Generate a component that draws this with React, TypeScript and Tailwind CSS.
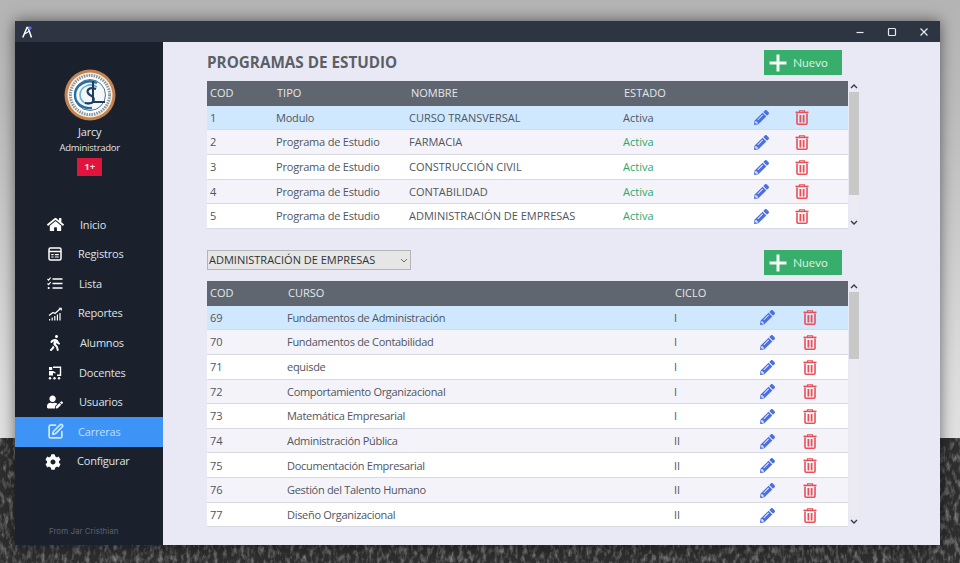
import React from "react";
import { FaHome, FaPencilAlt, FaWalking, FaUserEdit, FaCog } from "react-icons/fa";
import { SquarePen } from "lucide-react";

const ui = "font-['Open_Sans',sans-serif]";

function Logo() {
  return (
    <svg width="52" height="52" viewBox="0 0 52 52" className="block">
      <circle cx="26" cy="26" r="25.5" fill="#c4834e" />
      <circle cx="26" cy="26" r="22.5" fill="#f6ecdc" />
      <circle cx="26" cy="26" r="19.5" fill="#ffffff" stroke="#8496a6" strokeWidth="3" strokeDasharray="1.5 1" />
      <circle cx="26" cy="26" r="15.5" fill="#f3f7fa" stroke="#24506f" strokeWidth="0.8" />
      <path d="M33 14 C23 9 11 16 11 26 C11 35 19 40 28 39" fill="none" stroke="#2b6e99" strokeWidth="2.4" />
      <path d="M33 18 C26 13 16 18 16 26 C16 31 20 35 25 35" fill="none" stroke="#6fb0d6" strokeWidth="1.6" />
      <path d="M32 20 C24 17 21 23 26 26 C32 29 31 36 21 34" fill="none" stroke="#1d3f5c" strokeWidth="2.2" />
      <path d="M29 12 L29 33 L41 33" fill="none" stroke="#1d3f5c" strokeWidth="2" />
    </svg>
  );
}

function RegistrosIcon() {
  return (
    <svg width="14" height="14" viewBox="0 0 14 14">
      <rect x="1" y="1" width="12" height="12" rx="1.5" fill="none" stroke="#fff" strokeWidth="1.5" />
      <path d="M1 4.5H13" stroke="#fff" strokeWidth="1.5" />
      <path d="M3.2 7H5.6V8.2H3.2ZM3.2 9.4H5.6V10.6H3.2ZM6.8 7H10.8V8.2H6.8ZM6.8 9.4H10.8V10.6H6.8Z" fill="#fff" />
    </svg>
  );
}
function ListaIcon() {
  return (
    <svg width="16" height="13" viewBox="0 0 16 13">
      <path d="M5.5 2H15.5M5.5 6.5H15.5M5.5 11H15.5" stroke="#fff" strokeWidth="1.5" />
      <path d="M.5 2L1.6 3.1L3.6 .6M.5 6.5L1.6 7.6L3.6 5.1" stroke="#fff" strokeWidth="1.1" fill="none" />
      <circle cx="1.7" cy="11" r="1.1" fill="#fff" />
    </svg>
  );
}
function ReportesIcon() {
  return (
    <svg width="15" height="14" viewBox="0 0 15 14">
      <path d="M1 13.5V12H2.2V13.5ZM3.6 13.5V10.5H4.8V13.5ZM6.2 13.5V9H7.4V13.5ZM8.8 13.5V7.5H10V13.5ZM11.4 13.5V6H12.6V13.5Z" fill="#fff" />
      <path d="M1 8.5L5 5.5L7 6.5L12.5 1.5" stroke="#fff" strokeWidth="1.2" fill="none" />
      <path d="M10.5 .8H13.8V4Z" fill="#fff" />
    </svg>
  );
}
function DocentesIcon() {
  return (
    <svg width="14" height="14" viewBox="0 0 14 14">
      <path d="M5 1.2H12.5V9.3H9" fill="none" stroke="#fff" strokeWidth="1.4" />
      <rect x="1" y="1" width="3.2" height="3" fill="#fff" />
      <path d="M1 5H5L7.5 6.2V7.4L5 6.8V9.6H1Z" fill="#fff" />
      <circle cx="2" cy="12.3" r="1.2" fill="#fff" />
      <circle cx="6.5" cy="12.3" r="1.2" fill="#fff" />
      <circle cx="11" cy="12.3" r="1.2" fill="#fff" />
    </svg>
  );
}
function TrashIcon() {
  return (
    <svg width="14" height="15" viewBox="0 0 14 15" fill="none">
      <path d="M.5 2.4H13.5" stroke="currentColor" strokeWidth="1.6" />
      <path d="M4.5 2V.8H9.5V2" stroke="currentColor" strokeWidth="1.1" />
      <path d="M2 3.4V13.2Q2 14.2 3 14.2H11Q12 14.2 12 13.2V3.4" stroke="currentColor" strokeWidth="1.6" />
      <path d="M5.4 5V12.4M8.6 5V12.4" stroke="currentColor" strokeWidth="1.8" />
    </svg>
  );
}
function PlusIcon() {
  return (
    <svg width="18" height="18" viewBox="0 0 18 18">
      <path d="M9 .5V17.5M.5 9H17.5" stroke="#f4fbf7" strokeWidth="3" />
    </svg>
  );
}
function Chevron({ down }: { down?: boolean }) {
  return (
    <svg width="8" height="5" viewBox="0 0 8 5" fill="none">
      <path d={down ? "M1 1L4 4L7 1" : "M1 4L4 1L7 4"} stroke="#333b47" strokeWidth="1.4" />
    </svg>
  );
}

const nav = [
  { label: "Inicio", icon: <FaHome size={17} />, text: "pl-[16px]", iconBox: "ml-[31px]" },
  { label: "Registros", icon: <RegistrosIcon />, text: "pl-[14px]", iconBox: "ml-[31px]" },
  { label: "Lista", icon: <ListaIcon />, text: "pl-[15px]", iconBox: "ml-[31px]" },
  { label: "Reportes", icon: <ReportesIcon />, text: "pl-[14px]", iconBox: "ml-[31px]" },
  { label: "Alumnos", icon: <FaWalking size={16} />, text: "pl-[16px]", iconBox: "ml-[31px]" },
  { label: "Docentes", icon: <DocentesIcon />, text: "pl-[15px]", iconBox: "ml-[31px]" },
  { label: "Usuarios", icon: <FaUserEdit size={16} />, text: "pl-[15px]", iconBox: "ml-[31px]" },
  { label: "Carreras", icon: <SquarePen size={17} strokeWidth={2.4} />, text: "pl-[14px]", iconBox: "ml-[31px]", active: true },
  { label: "Configurar", icon: <FaCog size={16} />, text: "pl-[15px]", iconBox: "ml-[29px]" },
];

function Nuevo() {
  return (
    <button className="mr-[18px] flex h-[25px] w-[78px] items-center bg-[#37ae6b] pl-[5px] font-['Lato',sans-serif] text-[12px] text-[#d2eedd]">
      <PlusIcon />
      <span className="pl-[6px] pt-[1px]">Nuevo</span>
    </button>
  );
}

function Scrollbar({ thumb }: { thumb: string }) {
  return (
    <div className="ml-[1px] flex w-[10px] flex-col items-center">
      <div className="flex h-[11px] items-center justify-center"><Chevron /></div>
      <div className="w-full flex-1 bg-[#ecebf4]"><div className={`w-full bg-[#c8c8c8] ${thumb}`} /></div>
      <div className="flex h-[11px] items-center justify-center"><Chevron down /></div>
    </div>
  );
}

function Actions() {
  return (
    <>
      <div className="flex justify-center text-[#4c70e4]"><FaPencilAlt size={15} /></div>
      <div className="flex justify-center text-[#e84f58]"><TrashIcon /></div>
    </>
  );
}

function rowBg(i: number) {
  if (i === 0) return "bg-[#cfe8fd]";
  return i % 2 === 1 ? "bg-[#f4f3fa]" : "bg-white";
}

const programas = [
  ["1", "Modulo", "CURSO TRANSVERSAL", "Activa"],
  ["2", "Programa de Estudio", "FARMACIA", "Activa"],
  ["3", "Programa de Estudio", "CONSTRUCCIÓN CIVIL", "Activa"],
  ["4", "Programa de Estudio", "CONTABILIDAD", "Activa"],
  ["5", "Programa de Estudio", "ADMINISTRACIÓN DE EMPRESAS", "Activa"],
];
const cursos = [
  ["69", "Fundamentos de Administración", "I"],
  ["70", "Fundamentos de Contabilidad", "I"],
  ["71", "equisde", "I"],
  ["72", "Comportamiento Organizacional", "I"],
  ["73", "Matemática Empresarial", "I"],
  ["74", "Administración Pública", "II"],
  ["75", "Documentación Empresarial", "II"],
  ["76", "Gestión del Talento Humano", "II"],
  ["77", "Diseño Organizacional", "II"],
];

const rowBase = "items-center h-[24.65px] pt-[1px] border-b border-[#d9d9e2] text-[#4f5660]";
const headBase = "items-center h-[24.6px] bg-[#5f6670] text-[#e4e6ea]";

export default function App() {
  return (
    <div className={`relative h-[563px] w-[960px] overflow-hidden bg-[linear-gradient(180deg,#b4b4b4_0%,#bdbdbd_20%,#dcdcdc_65%,#e2e2e2_78%)] pl-[15px] pt-[21px] ${ui}`}>
      <svg className="absolute left-0 top-[438px]" width="960" height="125">
        <filter id="grass">
          <feTurbulence type="fractalNoise" baseFrequency="0.22 0.12" numOctaves="3" seed="4" />
          <feColorMatrix values="0 0 0 0 0.38  0 0 0 0 0.38  0 0 0 0 0.38  1.6 0 0 0 -0.7" />
        </filter>
        <rect width="960" height="125" fill="#2e2e2e" />
        <rect width="960" height="125" filter="url(#grass)" />
      </svg>

      <div className="relative flex h-[524px] w-[925px] flex-col shadow-[0_0_14px_rgba(0,0,0,0.55)]">
        <div className="flex h-[21px] items-center justify-between bg-[#2d3542]">
          <svg width="11" height="12" viewBox="0 0 11 12" className="ml-[7px]">
            <path d="M.8 11.5L5 1.5L6 1.5L9.5 11.5" fill="none" stroke="#fff" strokeWidth="1.5" />
            <path d="M2.5 8L7.5 5" stroke="#fff" strokeWidth="1.1" />
            <circle cx="8" cy="2" r="1.8" fill="#5266e8" />
          </svg>
          <div className="flex items-center text-[#e8eaee]">
            <svg width="10" height="10" viewBox="0 0 10 10"><path d="M1.5 5.5H8.5" stroke="currentColor" strokeWidth="1.2" /></svg>
            <svg width="10" height="10" viewBox="0 0 10 10" className="ml-[22px]"><rect x="1.5" y="1.5" width="7" height="7" rx="1" fill="none" stroke="currentColor" strokeWidth="1.2" /></svg>
            <svg width="10" height="10" viewBox="0 0 10 10" className="ml-[22px] mr-[11px]"><path d="M1.5 1.5L8.5 8.5M8.5 1.5L1.5 8.5" stroke="currentColor" strokeWidth="1.2" /></svg>
          </div>
        </div>

        <div className="flex min-h-0 flex-1">
          <aside className="flex w-[147.5px] shrink-0 flex-col bg-[#1a212d]">
            <div className="flex flex-col items-center pl-[2px] pt-[27px]">
              <Logo />
              <div className="mt-[3px] text-[11px] leading-[16px] tracking-[-0.2px] text-[#e2e4e8]">Jarcy</div>
              <div className="mt-[1px] text-[9.5px] leading-[14px] tracking-[-0.25px] text-[#e2e4e8]">Administrador</div>
              <div className="mt-[3px] flex h-[18px] w-[25px] items-center justify-center bg-[#e0143c] text-[9.5px] font-bold text-[#f7dfe3]">1+</div>
            </div>
            <nav className="mt-[34px] flex flex-col">
              {nav.map((n) => (
                <div key={n.label} className={`flex h-[29.6px] items-center text-[11px] tracking-[-0.2px] ${n.active ? "bg-[#3d94f6] text-[#bfe0ff]" : "text-[#dfe2e7]"}`}>
                  <div className={`flex w-[18px] justify-center ${n.iconBox} ${n.active ? "text-[#cfe8ff]" : "text-white"}`}>{n.icon}</div>
                  <span className={n.text}>{n.label}</span>
                </div>
              ))}
            </nav>
            <div className="mb-[8px] mt-auto pl-[34px] font-['Inter',sans-serif] text-[8px] leading-[12px] text-[#5a606b]">From Jar Cristhian</div>
          </aside>

          <main className="min-w-0 flex-1 bg-[#e9e9f5] pl-[44.5px] pt-[8px]">
            <div className="w-[653px]">
              <div className="mb-[6px] flex h-[25px] items-center justify-between">
                <h1 className="text-[15.25px] font-bold text-[#5b5f66]">PROGRAMAS DE ESTUDIO</h1>
                <Nuevo />
              </div>
              <div className="flex h-[147px]">
                <div className="w-[641px] text-[11px]">
                  <div className={`grid grid-cols-[69px_133px_214px_122px_32px_50px_21px] ${headBase}`}>
                    <span className="pl-[3px]">COD</span>
                    <span className="pl-[1px]">TIPO</span>
                    <span className="pl-[2px]">NOMBRE</span>
                    <span className="pl-[1px]">ESTADO</span>
                  </div>
                  {programas.map((r, i) => (
                    <div key={r[0]} className={`grid grid-cols-[69px_133px_214px_122px_32px_50px_21px] ${rowBase} ${rowBg(i)}`}>
                      <span className="pl-[3px]">{r[0]}</span>
                      <span className="tracking-[-0.2px]">{r[1]}</span>
                      <span>{r[2]}</span>
                      <span className={i === 0 ? "" : "text-[#2aa968]"}>{r[3]}</span>
                      <Actions />
                    </div>
                  ))}
                </div>
                <Scrollbar thumb="h-[103px]" />
              </div>

              <div className="mb-[6px] mt-[22px] flex h-[25px] items-start justify-between">
                <div className="flex h-[20px] w-[204px] items-center justify-between border border-[#b4b4b4] bg-[#e6e6e6] pl-[1px] pr-[2px] text-[11px] text-[#2f3237]">
                  <span>ADMINISTRACIÓN DE EMPRESAS</span>
                  <svg width="8" height="5" viewBox="0 0 8 5" fill="none"><path d="M1 1L4 4L7 1" stroke="#707070" strokeWidth="1" /></svg>
                </div>
                <Nuevo />
              </div>
              <div className="flex h-[246px]">
                <div className="w-[641px] text-[11px]">
                  <div className={`grid grid-cols-[80px_387px_77px_32px_54px_11px] ${headBase}`}>
                    <span className="pl-[3px]">COD</span>
                    <span className="pl-[1px]">CURSO</span>
                    <span className="pl-[1px]">CICLO</span>
                  </div>
                  {cursos.map((r, i) => (
                    <div key={r[0]} className={`grid grid-cols-[80px_387px_77px_32px_54px_11px] ${rowBase} ${rowBg(i)}`}>
                      <span className="pl-[3px]">{r[0]}</span>
                      <span className="tracking-[-0.3px]">{r[1]}</span>
                      <span>{r[2]}</span>
                      <Actions />
                    </div>
                  ))}
                </div>
                <Scrollbar thumb="h-[67px]" />
              </div>
            </div>
          </main>
        </div>
      </div>
    </div>
  );
}
